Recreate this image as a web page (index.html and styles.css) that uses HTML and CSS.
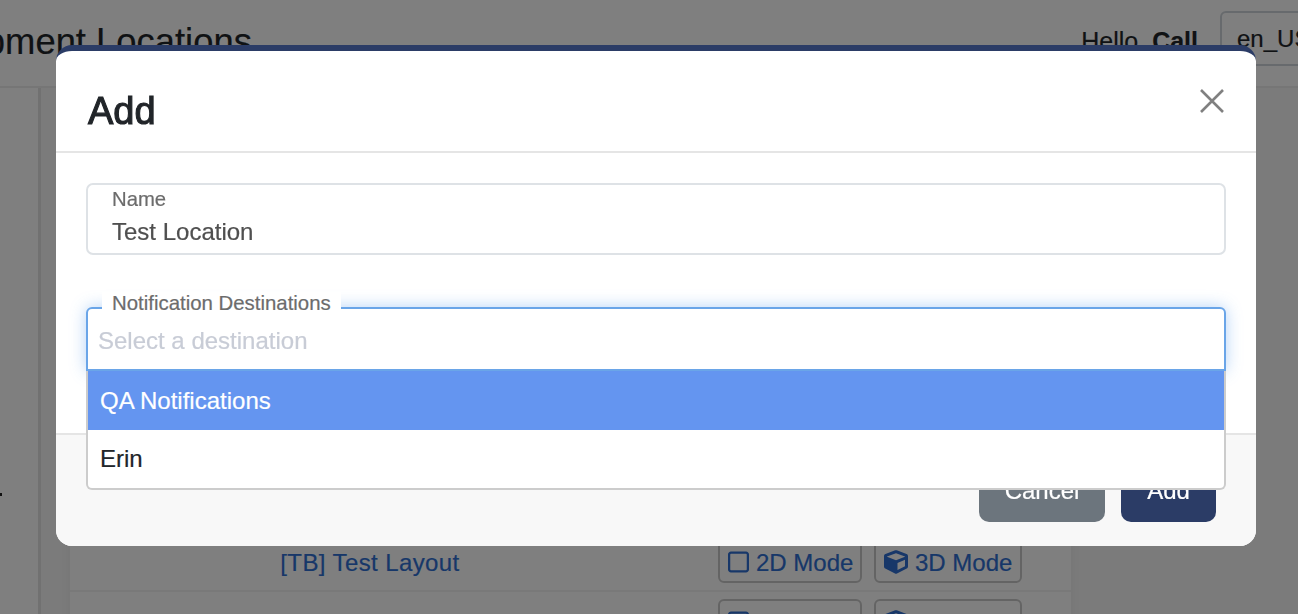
FILE: index.html
```html
<!DOCTYPE html>
<html lang="en">
<head>
<meta charset="utf-8">
<title>Equipment Locations</title>
<link rel="stylesheet" href="styles.css">
</head>
<body>
<div class="page">
  <header class="topbar">
    <h1 class="page-title">Equipment Locations</h1>
    <div class="user-area">
      <span class="hello">Hello, <b>Call</b></span>
      <span class="locale">en_US</span>
    </div>
  </header>
  <div class="main">
    <aside class="sidebar"><span class="side-dot"></span></aside>
    <section class="content">
      <div class="card">
        <div class="row">
          <a class="row-name">[TB] Test Layout</a>
          <div class="row-actions">
            <a class="mode-btn mode-2d"><svg class="ico" viewBox="0 0 448 512"><path d="M384 32H64C29 32 0 61 0 96v320c0 35 29 64 64 64h320c35 0 64-29 64-64V96c0-35-29-64-64-64zm16 384c0 9-7 16-16 16H64c-9 0-16-7-16-16V96c0-9 7-16 16-16h320c9 0 16 7 16 16v320z"/></svg>2D Mode</a>
            <a class="mode-btn mode-3d"><svg class="ico" viewBox="0 0 512 512"><path d="M239.1 6.3l-208 78c-18.7 7-31.1 25-31.1 45v225.1c0 18.2 10.3 34.8 26.5 42.9l208 104c13.5 6.8 29.4 6.8 42.9 0l208-104c16.3-8.1 26.5-24.8 26.5-42.9V129.3c0-20-12.4-37.9-31.1-44.9l-208-78C262 2.2 250 2.2 239.1 6.3zM256 68.4l192 72v1.1l-192 78-192-78v-1.1l192-72zm32 356V275.5l160-65v133.9l-160 80z"/></svg>3D Mode</a>
          </div>
        </div>
        <div class="row">
          <a class="row-name">First Floor</a>
          <div class="row-actions">
            <a class="mode-btn mode-2d"><svg class="ico" viewBox="0 0 448 512"><path d="M384 32H64C29 32 0 61 0 96v320c0 35 29 64 64 64h320c35 0 64-29 64-64V96c0-35-29-64-64-64zm16 384c0 9-7 16-16 16H64c-9 0-16-7-16-16V96c0-9 7-16 16-16h320c9 0 16 7 16 16v320z"/></svg>2D Mode</a>
            <a class="mode-btn mode-3d"><svg class="ico" viewBox="0 0 512 512"><path d="M239.1 6.3l-208 78c-18.7 7-31.1 25-31.1 45v225.1c0 18.2 10.3 34.8 26.5 42.9l208 104c13.5 6.8 29.4 6.8 42.9 0l208-104c16.3-8.1 26.5-24.8 26.5-42.9V129.3c0-20-12.4-37.9-31.1-44.9l-208-78C262 2.2 250 2.2 239.1 6.3zM256 68.4l192 72v1.1l-192 78-192-78v-1.1l192-72zm32 356V275.5l160-65v133.9l-160 80z"/></svg>3D Mode</a>
          </div>
        </div>
      </div>
    </section>
  </div>
</div>
<div class="backdrop"></div>
<div class="modal">
  <div class="modal-header">
    <h2 class="modal-title">Add</h2>
    <svg class="close" viewBox="0 0 26 26"><path d="M2 2l22 22M24 2L2 24"/></svg>
  </div>
  <div class="modal-body">
    <div class="field-name">
      <label class="name-label">Name</label>
      <div class="name-value">Test Location</div>
    </div>
    <div class="field-dest">
      <label class="dest-label">Notification Destinations</label>
      <div class="dest-control"><span class="placeholder">Select a destination</span></div>
      <ul class="menu">
        <li class="option option-active">QA Notifications</li>
        <li class="option">Erin</li>
      </ul>
    </div>
  </div>
  <div class="modal-footer">
    <button class="btn btn-cancel">Cancel</button>
    <button class="btn btn-add">Add</button>
  </div>
</div>
</body>
</html>
```

FILE: styles.css
```css
* { box-sizing: border-box; }
html, body { margin: 0; height: 100%; overflow: hidden; }
body { font-family: "Liberation Sans", Arial, sans-serif; background: #fff; color: #212529; -webkit-text-stroke: .2px currentColor; }

.page { height: 614px; display: flex; flex-direction: column; overflow: hidden; }
.topbar { height: 88px; flex: none; display: flex; justify-content: space-between; align-items: flex-start; background: #fff; border-bottom: 2px solid #ececec; }
.page-title { margin: 15px 0 0 -88px; font-size: 36.4px; line-height: 54px; font-weight: 400; white-space: nowrap; }
.user-area { display: flex; align-items: flex-start; gap: 22px; margin-right: -60px; }
.hello { font-size: 25px; line-height: 30px; margin-top: 26px; }
.locale { width: 138px; height: 55px; margin-top: 11px; border: 2px solid #ced4da; border-radius: 6px; padding: 11px 15px; font-size: 24px; line-height: 30px; }

.main { flex: 1; display: flex; background: #f6f6f6; }
.sidebar { width: 41px; flex: none; background: #fff; border-right: 3px solid #e3e3e3; padding-top: 405px; }
.side-dot { display: block; width: 2px; height: 3px; background: #222; }
.content { flex: 1; padding: 444px 227px 0 29px; }
.card { background: #fff; box-shadow: 0 0 10px rgba(0,0,0,.06); }
.row { display: grid; grid-template-columns: 600px 1fr; align-items: center; height: 60px; border-bottom: 2px solid #f2f2f2; }
.row-name { text-align: center; color: #2e6ed2; font-size: 24px; line-height: 30px; letter-spacing: .4px; padding-top: 4px; }
.row-actions { display: flex; gap: 12px; margin-left: 48px; }
.mode-btn { display: flex; align-items: center; height: 44px; border: 2px solid #c9c9c9; border-radius: 6px; color: #2e6ed2; font-size: 24px; padding: 3px 8px 0; white-space: nowrap; }
.mode-2d { width: 144px; }
.mode-3d { width: 148px; }
.ico { width: 21px; height: 24px; fill: currentColor; margin: -1px 7px 0 0; flex: none; }
.mode-3d .ico { width: 24px; }

.backdrop { position: fixed; inset: 0; background: rgba(0,0,0,.5); }

.modal { position: fixed; left: 56px; top: 45px; width: 1200px; height: 501px; background: #fff; border-top: 6px solid #2b3c66; border-radius: 16px; display: flex; flex-direction: column; overflow: hidden; }
.modal-header { height: 102px; flex: none; display: flex; justify-content: space-between; align-items: flex-start; padding: 0 32px; border-bottom: 2px solid #e5e5e5; }
.modal-title { margin: 36px 0 0; font-size: 38px; line-height: 48px; font-weight: 400; -webkit-text-stroke: 1.1px #212529; color: #212529; }
.close { width: 26px; height: 26px; margin: 37px -1px 0 0; fill: none; stroke: #808080; stroke-width: 2.6; }

.modal-body { height: 280px; flex: none; padding: 30px 30px 0; }
.field-name { height: 72px; border: 2px solid #dee2e6; border-radius: 7px; padding: 3px 24px 0; }
.name-label { display: block; font-size: 20.3px; line-height: 23px; color: #6c6c6c; }
.name-value { font-size: 24px; line-height: 32px; margin-top: 5px; color: #4f4f4f; }

.field-dest { position: relative; margin-top: 52px; }
.dest-label { position: absolute; left: 16px; top: -15px; background: #fff; padding: 0 10px; font-size: 20.4px; line-height: 23px; color: #6c6c6c; z-index: 2; }
.dest-control { height: 64px; border: 2px solid #6aa5e8; border-radius: 6px 6px 0 0; padding: 16px 10px 0; box-shadow: 0 0 16px rgba(70,145,235,.4); background: #fff; }
.placeholder { font-size: 24px; line-height: 32px; color: #c8ccd6; }

.menu { list-style: none; margin: 0; padding: 0; position: absolute; left: 0; right: 0; top: 64px; background: #fff; border: 2px solid #ccc; border-top: 0; border-radius: 0 0 6px 6px; z-index: 3; font-size: 24px; }
.option { height: 58px; padding: 0 12px; line-height: 58px; color: #212529; }
.option-active { height: 59px; line-height: 60px; background: #6495f0; color: #fff; }

.modal-footer { flex: 1; display: flex; justify-content: flex-end; align-items: flex-start; gap: 16px; padding: 25px 40px 0 0; background: #f8f8f8; border-top: 2px solid #e5e5e5; }
.btn { height: 62px; border: 0; border-radius: 10px; color: #fff; font: 24px/32px "Liberation Sans", Arial, sans-serif; }
.btn-cancel { width: 126px; background: #6c757d; }
.btn-add { width: 95px; background: #2b3c66; }
```
